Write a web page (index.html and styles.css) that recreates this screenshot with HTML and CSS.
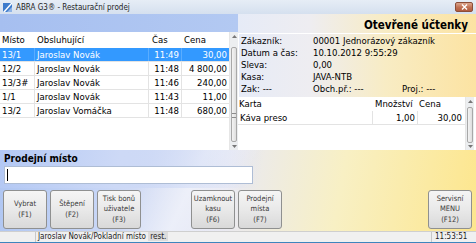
FILE: index.html
```html
<!DOCTYPE html>
<html lang="cs">
<head>
    <meta charset="UTF-8">
    <title>ABRA G3 - Restaurační prodej</title>
    <link rel="stylesheet" href="styles.css">
</head>
<body>
    <div class="window">
        <div class="titlebar">
            <svg class="app-icon" width="9" height="9" viewBox="0 0 9 9">
                <rect width="9" height="9" fill="#3d7bcc"/>
                <polygon points="0,9 2,9 9,1 9,0 8,0" fill="#ffffff"/>
                <polygon points="4,9 9,9 9,4" fill="#8fb4e6"/>
            </svg>
            <span class="title">ABRA G3® - Restaurační prodej</span>
            <span class="close">
                <svg width="7" height="6" viewBox="0 0 7 6"><path d="M1 0.5 L6 5.5 M6 0.5 L1 5.5" stroke="#fff" stroke-width="1.4"/></svg>
            </span>
        </div>

        <div class="main">
            <div class="left">
                <div class="band"></div>
                <div class="grid-box orders">
                    <div class="list">
                        <div class="head">
                            <div class="cell">Místo</div>
                            <div class="cell">Obsluhující</div>
                            <div class="cell time-h">Čas</div>
                            <div class="cell">Cena</div>
                        </div>
                        <div class="row selected">
                            <div class="cell">13/1</div>
                            <div class="cell">Jaroslav Novák</div>
                            <div class="cell num">11:49</div>
                            <div class="cell num">30,00</div>
                        </div>
                        <div class="row">
                            <div class="cell">12/2</div>
                            <div class="cell">Jaroslav Novák</div>
                            <div class="cell num">11:48</div>
                            <div class="cell num">4 800,00</div>
                        </div>
                        <div class="row">
                            <div class="cell">13/3#</div>
                            <div class="cell">Jaroslav Novák</div>
                            <div class="cell num">11:46</div>
                            <div class="cell num">240,00</div>
                        </div>
                        <div class="row">
                            <div class="cell">1/1</div>
                            <div class="cell">Jaroslav Novák</div>
                            <div class="cell num">11:43</div>
                            <div class="cell num">11,00</div>
                        </div>
                        <div class="row">
                            <div class="cell">13/2</div>
                            <div class="cell">Jaroslav Vomáčka</div>
                            <div class="cell num">11:48</div>
                            <div class="cell num">680,00</div>
                        </div>
                    </div>
                    <div class="vscroll long">
                        <div class="arrow up"><svg width="5" height="3" viewBox="0 0 5 3"><polygon points="0,3 5,3 2.5,0" fill="#777"/></svg></div>
                        <div class="thumb"><span class="grip"></span></div>
                        <div class="arrow down"><svg width="5" height="3" viewBox="0 0 5 3"><polygon points="0,0 5,0 2.5,3" fill="#777"/></svg></div>
                    </div>
                </div>
            </div>

            <div class="right">
                <div class="receipt">
                    <h1>Otevřené účtenky</h1>
                    <div class="details">
                        <div class="info"><span class="label">Zákazník:</span><span>00001 Jednorázový zákazník</span></div>
                        <div class="info"><span class="label">Datum a čas:</span><span>10.10.2012 9:55:29</span></div>
                        <div class="info"><span class="label">Sleva:</span><span>0,00</span></div>
                        <div class="info"><span class="label">Kasa:</span><span>JAVA-NTB</span></div>
                        <div class="info"><span class="label">Zak: ---</span><span class="mid">Obch.př.: ---</span><span>Proj.: ---</span></div>
                    </div>
                </div>
                <div class="grid-box items">
                    <div class="list">
                        <div class="head">
                            <div class="cell">Karta</div>
                            <div class="cell">Množství</div>
                            <div class="cell">Cena</div>
                        </div>
                        <div class="row">
                            <div class="cell">Káva preso</div>
                            <div class="cell num">1,00</div>
                            <div class="cell num">30,00</div>
                        </div>
                    </div>
                    <div class="vscroll short">
                        <div class="arrow up"><svg width="5" height="3" viewBox="0 0 5 3"><polygon points="0,3 5,3 2.5,0" fill="#777"/></svg></div>
                        <div class="thumb"></div>
                        <div class="arrow down"><svg width="5" height="3" viewBox="0 0 5 3"><polygon points="0,0 5,0 2.5,3" fill="#777"/></svg></div>
                    </div>
                </div>
            </div>
        </div>

        <div class="place">
            <div class="place-label">Prodejní místo</div>
            <div class="place-input"><span class="caret"></span></div>
        </div>

        <div class="buttons">
            <div class="group">
                <div class="btn">Vybrat<br>(F1)</div>
                <div class="btn">Štěpení<br>(F2)</div>
                <div class="btn">Tisk bonů<br>uživatele<br>(F3)</div>
            </div>
            <div class="group middle">
                <div class="btn">Uzamknout<br>kasu<br>(F6)</div>
                <div class="btn">Prodejní<br>místa<br>(F7)</div>
            </div>
            <div class="group last">
                <div class="btn">Servisní<br>MENU<br>(F12)</div>
            </div>
        </div>

        <div class="status">
            <div class="st-first"></div>
            <div class="st-user">Jaroslav Novák/Pokladní místo <span class="st-place">rest.</span></div>
            <div class="st-time">11:53:51</div>
        </div>
    </div>
</body>
</html>
```

FILE: styles.css
```css
body {
    margin: 0;
    font-family: "DejaVu Sans Condensed", "DejaVu Sans", sans-serif;
    font-stretch: condensed;
    font-size: 9.5px;
    color: #000;
}
.window {
    width: 476px;
    height: 243px;
    display: flex;
    flex-direction: column;
    overflow: hidden;
    background:
        linear-gradient(115deg, transparent 38%, rgba(255, 255, 255, 0.45) 47%, transparent 56%),
        linear-gradient(100deg, #a9c2f1 0%, #c6d5f6 25%, #e9e9f3 50%, #f8f0c4 72%, #fde68c 100%);
}

/* title bar */
.titlebar {
    height: 14px;
    display: flex;
    align-items: center;
    background: linear-gradient(#e6edf6, #d5e0ef);
    font-size: 8px;
    color: #1e1e1e;
}
.app-icon {
    margin: 0 4px 0 3px;
}
.title {
    flex: 1;
}
.close {
    width: 16px;
    height: 8px;
    margin-right: 3px;
    border: 1px solid #8b4d38;
    border-radius: 2px;
    background: linear-gradient(#dba58c, #c07052 55%, #b05c3f);
    display: flex;
    align-items: center;
    justify-content: center;
}

/* main area */
.main {
    height: 136px;
    display: flex;
}
.left {
    width: 238px;
    display: flex;
    flex-direction: column;
}
.band {
    height: 18px;
    background: linear-gradient(90deg, #a6bff0, #b3c9f2);
}
.right {
    width: 238px;
    display: flex;
    flex-direction: column;
}

.grid-box {
    display: flex;
    background: #fff;
}
.orders {
    height: 118px;
}
.list {
    flex: 1;
}
.head,
.row {
    display: grid;
}
.orders .head,
.orders .row {
    grid-template-columns: 35px 114px 33px 47px;
}
.orders .head {
    height: 16px;
    line-height: 16px;
}
.row {
    height: 13px;
    line-height: 13px;
    border-bottom: 1px solid #e3e3e3;
}
.cell {
    padding: 0 2px;
    white-space: nowrap;
    overflow: hidden;
}
.row .cell {
    border-right: 1px solid #e3e3e3;
}
.row .cell:last-child {
    border-right: none;
}
.num {
    text-align: right;
}
.time-h {
    padding-left: 3px;
}
.row.selected {
    background: #3399ff;
    color: #fff;
}
.row.selected .cell {
    border-right-color: #5aadff;
}

/* scrollbars */
.vscroll {
    width: 9px;
    display: flex;
    flex-direction: column;
    background: #eceef0;
    border-left: 1px solid #e6e6e6;
}
.arrow {
    display: flex;
    justify-content: center;
    align-items: center;
}
.thumb {
    margin: 0 1px;
    border: 1px solid #a8a8a8;
    border-radius: 2px;
    background: linear-gradient(90deg, #f4f4f4, #dedede);
    display: flex;
    align-items: center;
    justify-content: center;
}
.grip {
    width: 4px;
    height: 3px;
    border-top: 1px solid #8c8c8c;
    border-bottom: 1px solid #8c8c8c;
    margin-top: 42px;
}
.long .up {
    height: 8px;
}
.long .thumb {
    margin-top: 7px;
    height: 93px;
}
.long .down {
    flex: 1;
}
.short .up {
    height: 9px;
}
.short .thumb {
    margin-top: 1px;
    height: 34px;
}
.short .down {
    flex: 1;
}

/* open receipt info */
.receipt {
    height: 83px;
    display: flex;
    flex-direction: column;
    background: linear-gradient(90deg, #e6ebf7 0%, #eeedf1 30%, #f8ecc4 62%, #fce3a2 100%);
}
.receipt h1 {
    margin: 0;
    height: 19px;
    box-sizing: border-box;
    padding: 5px 8px 0 0;
    line-height: 13px;
    font-size: 11.5px;
    font-weight: bold;
    text-align: right;
}
.details {
    flex: 1;
    border-top: 1px solid #fff;
    border-left: 1px solid #fff;
    padding: 1px 0 0 2px;
}
.info {
    display: flex;
    height: 12px;
    line-height: 12px;
}
.label {
    width: 72px;
}
.mid {
    width: 89px;
}

.items {
    height: 53px;
    padding-right: 2px;
}
.items .head,
.items .row {
    grid-template-columns: 135px 45px 47px;
}
.items .head {
    height: 14px;
    line-height: 14px;
}
.items .head .cell {
    padding: 0 1px;
}
.items .head .cell:nth-child(2) {
    padding-left: 2px;
}
.items .row .cell:last-child {
    padding-right: 3px;
}

/* prodejni misto */
.place {
    height: 38px;
    padding: 3px 0 0 4px;
    box-sizing: border-box;
    background: linear-gradient(100deg, #b3c8f4 0%, #cdd9f6 25%, transparent 55%);
}
.place-label {
    font-weight: bold;
    font-size: 10px;
    line-height: 12px;
    height: 12px;
}
.place-input {
    margin-top: 1px;
    width: 249px;
    height: 18px;
    box-sizing: border-box;
    border: 1px solid #aebdd5;
    background: #fff;
    display: flex;
    align-items: center;
    padding-left: 2px;
}
.caret {
    width: 1px;
    height: 12px;
    background: #000;
}

/* buttons */
.buttons {
    height: 43px;
    box-sizing: border-box;
    padding: 2px 4px 0 3px;
    display: flex;
}
.group {
    display: flex;
    gap: 3px;
}
.group.middle {
    margin-left: 50px;
}
.group.last {
    margin-left: auto;
}
.btn {
    width: 44px;
    height: 39px;
    box-sizing: border-box;
    border: 1px solid #8f9090;
    border-radius: 3px;
    background: linear-gradient(#f5f5f5, #e9e9e9 50%, #d9d9d9);
    font-size: 7.5px;
    line-height: 10.5px;
    color: #3a3a3a;
    display: flex;
    align-items: center;
    justify-content: center;
    text-align: center;
}

/* status bar */
.status {
    height: 12px;
    box-sizing: border-box;
    display: flex;
    background: #f0f0f0;
    border-top: 1px solid #cfcfcf;
    border-bottom: 1px solid #3e85bd;
    font-size: 8px;
    line-height: 10px;
    color: #222;
}
.st-first {
    width: 35px;
    border-right: 1px solid #c8c8c8;
}
.st-user {
    flex: 1;
    padding-left: 2px;
}
.st-place {
    background: #dcdcdc;
    padding: 0 2px;
}
.st-time {
    width: 41px;
    border-left: 1px solid #c8c8c8;
    padding-left: 3px;
}
```
